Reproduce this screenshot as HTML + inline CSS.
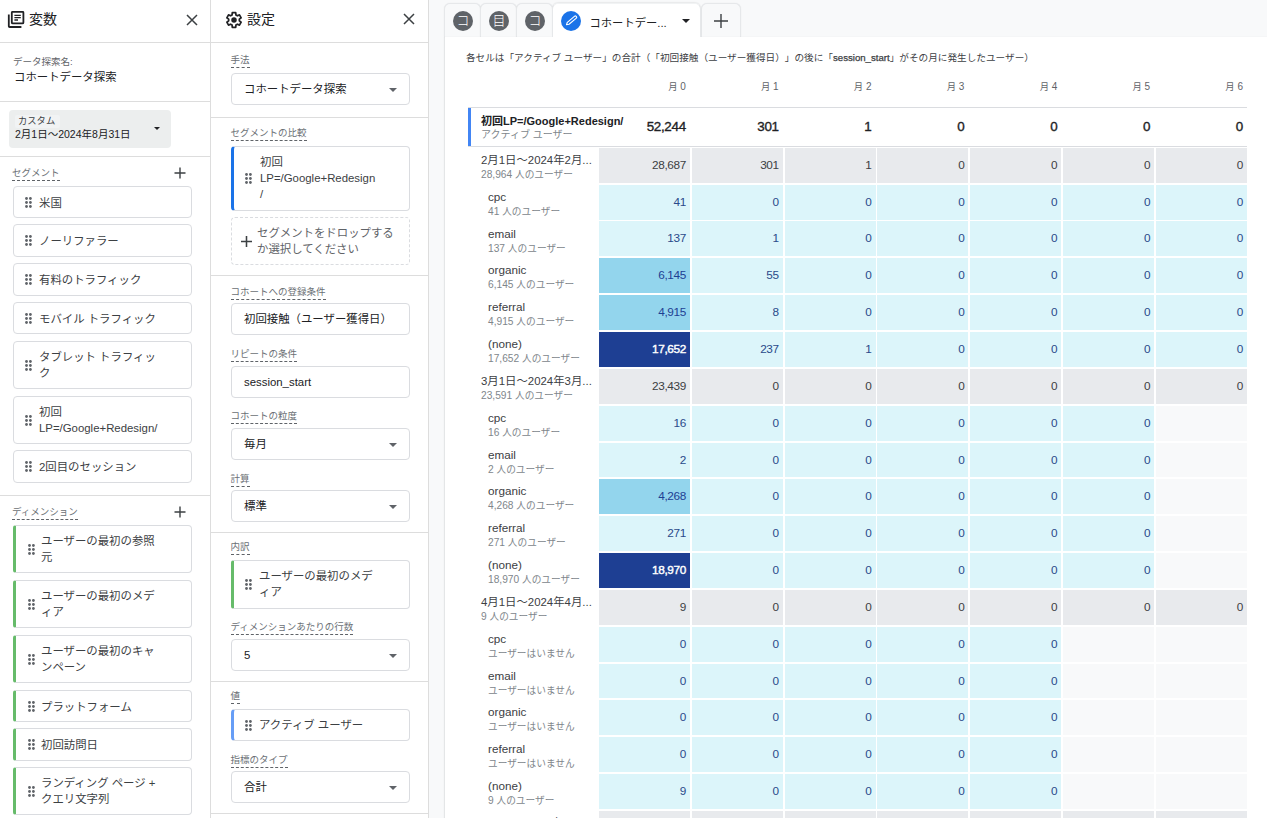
<!DOCTYPE html><html lang="ja"><head><meta charset="utf-8"><title>コホートデータ探索</title><style>
*{box-sizing:border-box;margin:0;padding:0}
html,body{text-spacing-trim:space-all;width:1267px;height:818px;overflow:hidden;background:#f8f9fa;font-family:"Liberation Sans", "Noto Sans CJK JP", sans-serif;color:#202124;font-size:12px}
.abs{position:absolute}
.panel{position:absolute;top:0;height:818px;background:#fff;overflow:hidden}
#vars{left:0;width:211px;border-right:1px solid #dddddd}
#sets{left:211px;width:218px;border-right:1px solid #dddddd}
.hline{position:absolute;left:0;right:0;height:1px;background:#dddddd}
.ptitle{position:absolute;top:9.5px;font-size:14px;line-height:18px;color:#202124}
.lbl{position:absolute;font-size:9.5px;line-height:12px;color:#6b7075;border-bottom:1px dashed #5f6368;padding-bottom:1px;white-space:nowrap}
.chip{position:absolute;background:#fff;border:1px solid #dadce0;border-radius:4px;font-size:11.4px;line-height:16px;color:#3c4043}
.chip .t{position:absolute;left:25px;white-space:nowrap}
.chip.g{border-left:3px solid #66bb6a;border-radius:3px 4px 4px 3px}
.chip.b{border-left:3px solid #1a73e8}
.chip.lb{border-left:3px solid #669df6}
.grip{position:absolute;width:7px;height:11px}
.sel{position:absolute;background:#fff;border:1px solid #dadce0;border-radius:4px;font-size:11.4px;line-height:16px;color:#202124}
.sel .t{position:absolute;left:12px;white-space:nowrap}
.arr{position:absolute;width:0;height:0;border-left:4.2px solid transparent;border-right:4.2px solid transparent;border-top:4.4px solid #5f6368}
#canvas{position:absolute;left:444.5px;top:37px;width:823px;height:781px;background:#fff;box-shadow:-1px 0 1px rgba(60,64,67,.10)}
.tab{position:absolute;top:3px;height:34px;background:#f8f9fa;border:1px solid #e6e8ea;border-bottom:none;border-radius:6px 6px 0 0;box-shadow:0 0 1px rgba(60,64,67,.12)}
.tab.act{background:#fff;border-color:#f1f3f4 #e6e8ea #fff #e6e8ea;box-shadow:0 -1px 1px rgba(60,64,67,.08)}
.circ{position:absolute;top:7px;width:20px;height:20px;border-radius:50%;background:#5f6368;color:#fff;font-size:13px;font-weight:300;line-height:19px;text-align:center}
.cell{position:absolute;height:34.9px;font-size:11.8px;letter-spacing:-.4px;line-height:35.6px;text-align:right;padding-right:4px;color:#3c4043}
.cell.c{background:#dcf5fa;color:#2a4a8a}
.cell.m{background:#93d5ed;color:#1e3f93}
.cell.d{background:#1e3f93;color:#fff;-webkit-text-stroke:.4px #fff}
.cell.gr{background:#e8eaed;color:#3c4043}
.cell.e{background:#f8f9fa}
.rl{position:absolute;font-size:11.4px;line-height:14px;color:#3c4043;white-space:nowrap}
.j{font-size:9.7px}
.rs{position:absolute;font-size:10.2px;line-height:12px;color:#80868b;white-space:nowrap}
.ch{position:absolute;font-size:10px;line-height:12px;color:#5f6368;text-align:right;white-space:nowrap}
</style></head><body>
<div class="panel" id="vars">
<svg class="abs" style="left:7px;top:11px" width="18" height="18" viewBox="0 0 18 18" fill="none" stroke="#202124" stroke-width="1.8"><path d="M1.8 3.4v11.8q0 .8 .8 .8h11.800"/><rect x="4.8" y=".8" width="11.6" height="11.6" rx="1"/><path d="M7.4 4.4h6.4M7.4 6.7h6.4M7.4 9h3.6" stroke-width="1.3"/></svg>
<div class="ptitle" style="left:29px">変数</div>
<svg class="abs" style="left:185.500px;top:13.600px" width="12" height="12" viewBox="0 0 12 12" stroke="#3c4043" stroke-width="1.5"><path d="M1 1l10 10M11 1L1 11"/></svg>
<div class="hline" style="top:42px"></div>
<div class="abs" style="left:13px;top:56px;font-size:9.5px;line-height:12px;color:#5f6368">データ探索名:</div>
<div class="abs" style="left:14px;top:69px;font-size:11.4px;line-height:16px;color:#202124">コホートデータ探索</div>
<div class="hline" style="top:101px"></div>
<div class="abs" style="left:9px;top:110px;width:162px;height:38px;background:#eceeee;border-radius:4px"></div>
<div class="abs" style="left:15px;top:115px;width:45px;height:13px;background:#f1f3f4;border-radius:2px"></div>
<div class="abs" style="left:18px;top:115px;font-size:9.3px;line-height:12px;color:#3c4043">カスタム</div>
<div class="abs" style="left:15px;top:127px;font-size:10.5px;line-height:14px;color:#202124;white-space:nowrap">2月1日～2024年8月31日</div>
<div class="arr" style="left:154px;top:127px;border-top-color:#202124;border-width:3px 3px 0 3px;border-top-width:3px"></div>
<div class="hline" style="top:156px"></div>
<div class="lbl" style="left:12px;top:167px">セグメント</div>
<svg class="abs" style="left:174px;top:167px" width="12" height="12" viewBox="0 0 12 12" stroke="#3c4043" stroke-width="1.4"><path d="M6 .5v11M.5 6h11"/></svg>
<div class="chip" style="left:13px;top:186px;width:179px;height:32px">
<svg class="grip" style="left:11px;top:10px" viewBox="0 0 7 11"><g fill="#5f6368"><circle cx="1.50" cy="1.50" r="1.4"/><circle cx="5.40" cy="1.50" r="1.4"/><circle cx="1.50" cy="5.50" r="1.4"/><circle cx="5.40" cy="5.50" r="1.4"/><circle cx="1.50" cy="9.50" r="1.4"/><circle cx="5.40" cy="9.50" r="1.4"/></g></svg>
<div class="t" style="left:25px;top:8px">米国</div>
</div>
<div class="chip" style="left:13px;top:224px;width:179px;height:33px">
<svg class="grip" style="left:11px;top:10px" viewBox="0 0 7 11"><g fill="#5f6368"><circle cx="1.50" cy="1.50" r="1.4"/><circle cx="5.40" cy="1.50" r="1.4"/><circle cx="1.50" cy="5.50" r="1.4"/><circle cx="5.40" cy="5.50" r="1.4"/><circle cx="1.50" cy="9.50" r="1.4"/><circle cx="5.40" cy="9.50" r="1.4"/></g></svg>
<div class="t" style="left:25px;top:8px">ノーリファラー</div>
</div>
<div class="chip" style="left:13px;top:263px;width:179px;height:33px">
<svg class="grip" style="left:11px;top:10px" viewBox="0 0 7 11"><g fill="#5f6368"><circle cx="1.50" cy="1.50" r="1.4"/><circle cx="5.40" cy="1.50" r="1.4"/><circle cx="1.50" cy="5.50" r="1.4"/><circle cx="5.40" cy="5.50" r="1.4"/><circle cx="1.50" cy="9.50" r="1.4"/><circle cx="5.40" cy="9.50" r="1.4"/></g></svg>
<div class="t" style="left:25px;top:8px">有料のトラフィック</div>
</div>
<div class="chip" style="left:13px;top:302px;width:179px;height:32px">
<svg class="grip" style="left:11px;top:10px" viewBox="0 0 7 11"><g fill="#5f6368"><circle cx="1.50" cy="1.50" r="1.4"/><circle cx="5.40" cy="1.50" r="1.4"/><circle cx="1.50" cy="5.50" r="1.4"/><circle cx="5.40" cy="5.50" r="1.4"/><circle cx="1.50" cy="9.50" r="1.4"/><circle cx="5.40" cy="9.50" r="1.4"/></g></svg>
<div class="t" style="left:25px;top:8px">モバイル トラフィック</div>
</div>
<div class="chip" style="left:13px;top:341px;width:179px;height:48px">
<svg class="grip" style="left:11px;top:18px" viewBox="0 0 7 11"><g fill="#5f6368"><circle cx="1.50" cy="1.50" r="1.4"/><circle cx="5.40" cy="1.50" r="1.4"/><circle cx="1.50" cy="5.50" r="1.4"/><circle cx="5.40" cy="5.50" r="1.4"/><circle cx="1.50" cy="9.50" r="1.4"/><circle cx="5.40" cy="9.50" r="1.4"/></g></svg>
<div class="t" style="left:25px;top:7px">タブレット トラフィッ<br>ク</div>
</div>
<div class="chip" style="left:13px;top:396px;width:179px;height:48px">
<svg class="grip" style="left:11px;top:18px" viewBox="0 0 7 11"><g fill="#5f6368"><circle cx="1.50" cy="1.50" r="1.4"/><circle cx="5.40" cy="1.50" r="1.4"/><circle cx="1.50" cy="5.50" r="1.4"/><circle cx="5.40" cy="5.50" r="1.4"/><circle cx="1.50" cy="9.50" r="1.4"/><circle cx="5.40" cy="9.50" r="1.4"/></g></svg>
<div class="t" style="left:25px;top:7px">初回<br>LP=/Google+Redesign/</div>
</div>
<div class="chip" style="left:13px;top:450px;width:179px;height:33px">
<svg class="grip" style="left:11px;top:10px" viewBox="0 0 7 11"><g fill="#5f6368"><circle cx="1.50" cy="1.50" r="1.4"/><circle cx="5.40" cy="1.50" r="1.4"/><circle cx="1.50" cy="5.50" r="1.4"/><circle cx="5.40" cy="5.50" r="1.4"/><circle cx="1.50" cy="9.50" r="1.4"/><circle cx="5.40" cy="9.50" r="1.4"/></g></svg>
<div class="t" style="left:25px;top:8px">2回目のセッション</div>
</div>
<div class="hline" style="top:495px"></div>
<div class="lbl" style="left:12px;top:506px">ディメンション</div>
<svg class="abs" style="left:174px;top:506px" width="12" height="12" viewBox="0 0 12 12" stroke="#3c4043" stroke-width="1.4"><path d="M6 .5v11M.5 6h11"/></svg>
<div class="chip g" style="left:13px;top:525px;width:179px;height:48px">
<svg class="grip" style="left:12px;top:18px" viewBox="0 0 7 11"><g fill="#5f6368"><circle cx="1.50" cy="1.50" r="1.4"/><circle cx="5.40" cy="1.50" r="1.4"/><circle cx="1.50" cy="5.50" r="1.4"/><circle cx="5.40" cy="5.50" r="1.4"/><circle cx="1.50" cy="9.50" r="1.4"/><circle cx="5.40" cy="9.50" r="1.4"/></g></svg>
<div class="t" style="left:25px;top:7px">ユーザーの最初の参照<br>元</div>
</div>
<div class="chip g" style="left:13px;top:580px;width:179px;height:48px">
<svg class="grip" style="left:12px;top:18px" viewBox="0 0 7 11"><g fill="#5f6368"><circle cx="1.50" cy="1.50" r="1.4"/><circle cx="5.40" cy="1.50" r="1.4"/><circle cx="1.50" cy="5.50" r="1.4"/><circle cx="5.40" cy="5.50" r="1.4"/><circle cx="1.50" cy="9.50" r="1.4"/><circle cx="5.40" cy="9.50" r="1.4"/></g></svg>
<div class="t" style="left:25px;top:7px">ユーザーの最初のメデ<br>ィア</div>
</div>
<div class="chip g" style="left:13px;top:635px;width:179px;height:48px">
<svg class="grip" style="left:12px;top:18px" viewBox="0 0 7 11"><g fill="#5f6368"><circle cx="1.50" cy="1.50" r="1.4"/><circle cx="5.40" cy="1.50" r="1.4"/><circle cx="1.50" cy="5.50" r="1.4"/><circle cx="5.40" cy="5.50" r="1.4"/><circle cx="1.50" cy="9.50" r="1.4"/><circle cx="5.40" cy="9.50" r="1.4"/></g></svg>
<div class="t" style="left:25px;top:7px">ユーザーの最初のキャ<br>ンペーン</div>
</div>
<div class="chip g" style="left:13px;top:690px;width:179px;height:32px">
<svg class="grip" style="left:12px;top:10px" viewBox="0 0 7 11"><g fill="#5f6368"><circle cx="1.50" cy="1.50" r="1.4"/><circle cx="5.40" cy="1.50" r="1.4"/><circle cx="1.50" cy="5.50" r="1.4"/><circle cx="5.40" cy="5.50" r="1.4"/><circle cx="1.50" cy="9.50" r="1.4"/><circle cx="5.40" cy="9.50" r="1.4"/></g></svg>
<div class="t" style="left:25px;top:8px">プラットフォーム</div>
</div>
<div class="chip g" style="left:13px;top:728px;width:179px;height:33px">
<svg class="grip" style="left:12px;top:10px" viewBox="0 0 7 11"><g fill="#5f6368"><circle cx="1.50" cy="1.50" r="1.4"/><circle cx="5.40" cy="1.50" r="1.4"/><circle cx="1.50" cy="5.50" r="1.4"/><circle cx="5.40" cy="5.50" r="1.4"/><circle cx="1.50" cy="9.50" r="1.4"/><circle cx="5.40" cy="9.50" r="1.4"/></g></svg>
<div class="t" style="left:25px;top:8px">初回訪問日</div>
</div>
<div class="chip g" style="left:13px;top:767px;width:179px;height:48px">
<svg class="grip" style="left:12px;top:18px" viewBox="0 0 7 11"><g fill="#5f6368"><circle cx="1.50" cy="1.50" r="1.4"/><circle cx="5.40" cy="1.50" r="1.4"/><circle cx="1.50" cy="5.50" r="1.4"/><circle cx="5.40" cy="5.50" r="1.4"/><circle cx="1.50" cy="9.50" r="1.4"/><circle cx="5.40" cy="9.50" r="1.4"/></g></svg>
<div class="t" style="left:25px;top:7px">ランディング ページ +<br>クエリ文字列</div>
</div>
</div>
<div class="panel" id="sets">
<svg class="abs" style="left:14px;top:10.500px" width="18" height="18" viewBox="-8.800 -8.800 17.600 17.600"><path d="M-1.90 -4.95 L-1.64 -7.11 L1.64 -7.11 L1.90 -4.95 L3.34 -4.12 L5.34 -4.98 L6.98 -2.13 L5.23 -0.83 L5.23 0.83 L6.98 2.13 L5.34 4.98 L3.34 4.12 L1.90 4.95 L1.64 7.11 L-1.64 7.11 L-1.90 4.95 L-3.34 4.12 L-5.34 4.98 L-6.98 2.13 L-5.23 0.83 L-5.23 -0.83 L-6.98 -2.13 L-5.34 -4.98 L-3.34 -4.12Z" fill="none" stroke="#202124" stroke-width="1.7" stroke-linejoin="round"/><circle r="2.7" fill="#202124"/></svg>
<div class="ptitle" style="left:36px">設定</div>
<svg class="abs" style="left:191.500px;top:13px" width="12" height="12" viewBox="0 0 12 12" stroke="#3c4043" stroke-width="1.5"><path d="M1 1l10 10M11 1L1 11"/></svg>
<div class="hline" style="top:42px"></div>
<div class="lbl" style="left:19.5px;top:54px">手法</div>
<div class="sel" style="left:20px;top:73px;width:179px;height:32px"><div class="t" style="top:7px">コホートデータ探索</div>
<div class="arr" style="right:12px;top:14px"></div>
</div>
<div class="hline" style="top:117px"></div>
<div class="lbl" style="left:19.5px;top:127px">セグメントの比較</div>
<div class="chip b" style="left:20px;top:146px;width:179px;height:65px"><svg class="grip" style="left:11px;top:25.5px" viewBox="0 0 7 11"><g fill="#5f6368"><circle cx="1.50" cy="1.50" r="1.4"/><circle cx="5.40" cy="1.50" r="1.4"/><circle cx="1.50" cy="5.50" r="1.4"/><circle cx="5.40" cy="5.50" r="1.4"/><circle cx="1.50" cy="9.50" r="1.4"/><circle cx="5.40" cy="9.50" r="1.4"/></g></svg><div class="t" style="left:26px;top:7px">初回<br>LP=/Google+Redesign<br>/</div></div>
<div class="abs" style="left:20px;top:217px;width:179px;height:48px;border:1px dashed #dadce0;border-radius:4px"></div>
<svg class="abs" style="left:29.500px;top:235.500px" width="11" height="11" viewBox="0 0 10 10" stroke="#3c4043" stroke-width="1.4"><path d="M5 0v10M0 5h10"/></svg>
<div class="abs" style="left:46px;top:225px;font-size:11.4px;line-height:16px;color:#5f6368;white-space:nowrap">セグメントをドロップする<br>か選択してください</div>
<div class="hline" style="top:275px"></div>
<div class="lbl" style="left:19.5px;top:286px">コホートへの登録条件</div>
<div class="sel" style="left:20px;top:303px;width:179px;height:32px"><div class="t" style="top:7px">初回接触（ユーザー獲得日）</div>
</div>
<div class="lbl" style="left:19.5px;top:348px">リピートの条件</div>
<div class="sel" style="left:20px;top:366px;width:179px;height:32px"><div class="t" style="top:7px">session_start</div>
</div>
<div class="lbl" style="left:19.5px;top:410px">コホートの粒度</div>
<div class="sel" style="left:20px;top:428px;width:179px;height:32px"><div class="t" style="top:7px">毎月</div>
<div class="arr" style="right:12px;top:14px"></div>
</div>
<div class="lbl" style="left:19.5px;top:473px">計算</div>
<div class="sel" style="left:20px;top:490px;width:179px;height:32px"><div class="t" style="top:7px">標準</div>
<div class="arr" style="right:12px;top:14px"></div>
</div>
<div class="hline" style="top:532px"></div>
<div class="lbl" style="left:19.5px;top:541px">内訳</div>
<div class="chip g" style="left:20px;top:560px;width:179px;height:49px"><svg class="grip" style="left:11px;top:18px" viewBox="0 0 7 11"><g fill="#5f6368"><circle cx="1.50" cy="1.50" r="1.4"/><circle cx="5.40" cy="1.50" r="1.4"/><circle cx="1.50" cy="5.50" r="1.4"/><circle cx="5.40" cy="5.50" r="1.4"/><circle cx="1.50" cy="9.50" r="1.4"/><circle cx="5.40" cy="9.50" r="1.4"/></g></svg><div class="t" style="left:25px;top:7px">ユーザーの最初のメデ<br>ィア</div></div>
<div class="lbl" style="left:19.5px;top:621px">ディメンションあたりの行数</div>
<div class="sel" style="left:20px;top:639px;width:179px;height:32px"><div class="t" style="top:7px">5</div>
<div class="arr" style="right:12px;top:14px"></div>
</div>
<div class="hline" style="top:681px"></div>
<div class="lbl" style="left:19.5px;top:690px">値</div>
<div class="chip lb" style="left:20px;top:709px;width:179px;height:32px"><svg class="grip" style="left:11px;top:10px" viewBox="0 0 7 11"><g fill="#5f6368"><circle cx="1.50" cy="1.50" r="1.4"/><circle cx="5.40" cy="1.50" r="1.4"/><circle cx="1.50" cy="5.50" r="1.4"/><circle cx="5.40" cy="5.50" r="1.4"/><circle cx="1.50" cy="9.50" r="1.4"/><circle cx="5.40" cy="9.50" r="1.4"/></g></svg><div class="t" style="left:25px;top:7px">アクティブ ユーザー</div></div>
<div class="lbl" style="left:19.5px;top:754px">指標のタイプ</div>
<div class="sel" style="left:20px;top:771px;width:179px;height:32px"><div class="t" style="top:7px">合計</div>
<div class="arr" style="right:12px;top:14px"></div>
</div>
<div class="hline" style="top:813px"></div>
</div>
<div class="tab" style="left:444px;width:37px"><div class="circ" style="left:8px">コ</div></div>
<div class="tab" style="left:480px;width:37px"><div class="circ" style="left:8px">目</div></div>
<div class="tab" style="left:516px;width:37px"><div class="circ" style="left:8px">コ</div></div>
<div class="tab" style="left:701px;width:40px"><svg class="abs" style="left:12px;top:10px" width="14" height="14" viewBox="0 0 14 14" stroke="#3c4043" stroke-width="1.4"><path d="M7 0v14M0 7h14"/></svg></div>
<div id="canvas"></div>
<div class="tab act" style="left:552px;width:149px"><div class="circ" style="left:8px;background:#1a73e8"><svg style="position:absolute;left:0;top:0" width="20" height="20" viewBox="0 0 20 20" fill="none" stroke="#fff" stroke-width="1.1" stroke-linejoin="round"><g transform="translate(10.4,9.6) rotate(-40)"><path d="M-4.200 -1.300H5.400Q6.300 -1.300 6.300 -.5V.5Q6.300 1.300 5.400 1.300H-4.200L-6.400 0Z"/></g></svg></div><div class="abs" style="left:36.500px;top:10.500px;font-size:11.3px;line-height:16px;white-space:nowrap">コホートデー...</div><div class="arr" style="left:129px;top:15px;border-top-color:#202124"></div></div>
<div class="abs" id="desc" style="left:466px;top:52px;font-size:9.65px;line-height:12px;color:#3c4043;white-space:nowrap">各セルは「アクティブ ユーザー」の合計（「初回接触（ユーザー獲得日）」の後に「<span style="-webkit-text-stroke:.25px #3c4043">session_start</span>」がその月に発生したユーザー）</div>
<div class="ch" style="left:598.8px;top:81px;width:87.0px"><span style="font-size:9.3px">月</span> 0</div>
<div class="ch" style="left:691.7px;top:81px;width:87.0px"><span style="font-size:9.3px">月</span> 1</div>
<div class="ch" style="left:784.5px;top:81px;width:87.0px"><span style="font-size:9.3px">月</span> 2</div>
<div class="ch" style="left:877.4px;top:81px;width:87.0px"><span style="font-size:9.3px">月</span> 3</div>
<div class="ch" style="left:970.3px;top:81px;width:87.0px"><span style="font-size:9.3px">月</span> 4</div>
<div class="ch" style="left:1063.2px;top:81px;width:87.0px"><span style="font-size:9.3px">月</span> 5</div>
<div class="ch" style="left:1156.0px;top:81px;width:87.0px"><span style="font-size:9.3px">月</span> 6</div>
<div class="abs" style="left:468px;top:107px;width:779px;height:1px;background:#dadce0"></div>
<div class="abs" style="left:468px;top:146px;width:779px;height:1px;background:#dadce0"></div>
<div class="abs" style="left:468px;top:108px;width:3px;height:38px;background:#4285f4"></div>
<div class="abs" style="left:481px;top:113.5px;font-size:11px;line-height:14px;font-weight:bold;color:#202124;white-space:nowrap">初回LP=/Google+Redesign/</div>
<div class="abs" style="left:481px;top:129px;font-size:10px;line-height:12px;color:#80868b;white-space:nowrap">アクティブ ユーザー</div>
<div class="abs" style="left:598.8px;top:108px;width:87.0px;height:38px;line-height:38px;text-align:right;font-size:13.4px;letter-spacing:-.3px;-webkit-text-stroke:.35px #202124;color:#202124">52,244</div>
<div class="abs" style="left:691.7px;top:108px;width:87.0px;height:38px;line-height:38px;text-align:right;font-size:13.4px;letter-spacing:-.3px;-webkit-text-stroke:.35px #202124;color:#202124">301</div>
<div class="abs" style="left:784.5px;top:108px;width:87.0px;height:38px;line-height:38px;text-align:right;font-size:13.4px;letter-spacing:-.3px;-webkit-text-stroke:.35px #202124;color:#202124">1</div>
<div class="abs" style="left:877.4px;top:108px;width:87.0px;height:38px;line-height:38px;text-align:right;font-size:13.4px;letter-spacing:-.3px;-webkit-text-stroke:.35px #202124;color:#202124">0</div>
<div class="abs" style="left:970.3px;top:108px;width:87.0px;height:38px;line-height:38px;text-align:right;font-size:13.4px;letter-spacing:-.3px;-webkit-text-stroke:.35px #202124;color:#202124">0</div>
<div class="abs" style="left:1063.2px;top:108px;width:87.0px;height:38px;line-height:38px;text-align:right;font-size:13.4px;letter-spacing:-.3px;-webkit-text-stroke:.35px #202124;color:#202124">0</div>
<div class="abs" style="left:1156.0px;top:108px;width:87.0px;height:38px;line-height:38px;text-align:right;font-size:13.4px;letter-spacing:-.3px;-webkit-text-stroke:.35px #202124;color:#202124">0</div>
<div class="rl" style="left:481px;top:152.8px">2月1日～2024年2月...</div>
<div class="rs" style="left:481px;top:168.8px">28,964 <span class="j">人のユーザー</span></div>
<div class="cell gr" style="left:598.80px;top:147.80px;width:91.00px">28,687</div>
<div class="cell gr" style="left:691.67px;top:147.80px;width:91.00px">301</div>
<div class="cell gr" style="left:784.54px;top:147.80px;width:91.00px">1</div>
<div class="cell gr" style="left:877.41px;top:147.80px;width:91.00px">0</div>
<div class="cell gr" style="left:970.28px;top:147.80px;width:91.00px">0</div>
<div class="cell gr" style="left:1063.15px;top:147.80px;width:91.00px">0</div>
<div class="cell gr" style="left:1156.02px;top:147.80px;width:91.00px">0</div>
<div class="rl" style="left:488px;top:189.6px;font-size:11.7px">cpc</div>
<div class="rs" style="left:488px;top:205.6px">41 <span class="j">人のユーザー</span></div>
<div class="cell c" style="left:598.80px;top:184.64px;width:91.00px">41</div>
<div class="cell c" style="left:691.67px;top:184.64px;width:91.00px">0</div>
<div class="cell c" style="left:784.54px;top:184.64px;width:91.00px">0</div>
<div class="cell c" style="left:877.41px;top:184.64px;width:91.00px">0</div>
<div class="cell c" style="left:970.28px;top:184.64px;width:91.00px">0</div>
<div class="cell c" style="left:1063.15px;top:184.64px;width:91.00px">0</div>
<div class="cell c" style="left:1156.02px;top:184.64px;width:91.00px">0</div>
<div class="rl" style="left:488px;top:226.5px;font-size:11.7px">email</div>
<div class="rs" style="left:488px;top:242.5px">137 <span class="j">人のユーザー</span></div>
<div class="cell c" style="left:598.80px;top:221.48px;width:91.00px">137</div>
<div class="cell c" style="left:691.67px;top:221.48px;width:91.00px">1</div>
<div class="cell c" style="left:784.54px;top:221.48px;width:91.00px">0</div>
<div class="cell c" style="left:877.41px;top:221.48px;width:91.00px">0</div>
<div class="cell c" style="left:970.28px;top:221.48px;width:91.00px">0</div>
<div class="cell c" style="left:1063.15px;top:221.48px;width:91.00px">0</div>
<div class="cell c" style="left:1156.02px;top:221.48px;width:91.00px">0</div>
<div class="rl" style="left:488px;top:263.3px;font-size:11.7px">organic</div>
<div class="rs" style="left:488px;top:279.3px">6,145 <span class="j">人のユーザー</span></div>
<div class="cell m" style="left:598.80px;top:258.32px;width:91.00px">6,145</div>
<div class="cell c" style="left:691.67px;top:258.32px;width:91.00px">55</div>
<div class="cell c" style="left:784.54px;top:258.32px;width:91.00px">0</div>
<div class="cell c" style="left:877.41px;top:258.32px;width:91.00px">0</div>
<div class="cell c" style="left:970.28px;top:258.32px;width:91.00px">0</div>
<div class="cell c" style="left:1063.15px;top:258.32px;width:91.00px">0</div>
<div class="cell c" style="left:1156.02px;top:258.32px;width:91.00px">0</div>
<div class="rl" style="left:488px;top:300.2px;font-size:11.7px">referral</div>
<div class="rs" style="left:488px;top:316.2px">4,915 <span class="j">人のユーザー</span></div>
<div class="cell m" style="left:598.80px;top:295.16px;width:91.00px">4,915</div>
<div class="cell c" style="left:691.67px;top:295.16px;width:91.00px">8</div>
<div class="cell c" style="left:784.54px;top:295.16px;width:91.00px">0</div>
<div class="cell c" style="left:877.41px;top:295.16px;width:91.00px">0</div>
<div class="cell c" style="left:970.28px;top:295.16px;width:91.00px">0</div>
<div class="cell c" style="left:1063.15px;top:295.16px;width:91.00px">0</div>
<div class="cell c" style="left:1156.02px;top:295.16px;width:91.00px">0</div>
<div class="rl" style="left:488px;top:337.0px;font-size:11.7px">(none)</div>
<div class="rs" style="left:488px;top:353.0px">17,652 <span class="j">人のユーザー</span></div>
<div class="cell d" style="left:598.80px;top:332.00px;width:91.00px">17,652</div>
<div class="cell c" style="left:691.67px;top:332.00px;width:91.00px">237</div>
<div class="cell c" style="left:784.54px;top:332.00px;width:91.00px">1</div>
<div class="cell c" style="left:877.41px;top:332.00px;width:91.00px">0</div>
<div class="cell c" style="left:970.28px;top:332.00px;width:91.00px">0</div>
<div class="cell c" style="left:1063.15px;top:332.00px;width:91.00px">0</div>
<div class="cell c" style="left:1156.02px;top:332.00px;width:91.00px">0</div>
<div class="rl" style="left:481px;top:373.8px">3月1日～2024年3月...</div>
<div class="rs" style="left:481px;top:389.8px">23,591 <span class="j">人のユーザー</span></div>
<div class="cell gr" style="left:598.80px;top:368.84px;width:91.00px">23,439</div>
<div class="cell gr" style="left:691.67px;top:368.84px;width:91.00px">0</div>
<div class="cell gr" style="left:784.54px;top:368.84px;width:91.00px">0</div>
<div class="cell gr" style="left:877.41px;top:368.84px;width:91.00px">0</div>
<div class="cell gr" style="left:970.28px;top:368.84px;width:91.00px">0</div>
<div class="cell gr" style="left:1063.15px;top:368.84px;width:91.00px">0</div>
<div class="cell gr" style="left:1156.02px;top:368.84px;width:91.00px">0</div>
<div class="rl" style="left:488px;top:410.7px;font-size:11.7px">cpc</div>
<div class="rs" style="left:488px;top:426.7px">16 <span class="j">人のユーザー</span></div>
<div class="cell c" style="left:598.80px;top:405.68px;width:91.00px">16</div>
<div class="cell c" style="left:691.67px;top:405.68px;width:91.00px">0</div>
<div class="cell c" style="left:784.54px;top:405.68px;width:91.00px">0</div>
<div class="cell c" style="left:877.41px;top:405.68px;width:91.00px">0</div>
<div class="cell c" style="left:970.28px;top:405.68px;width:91.00px">0</div>
<div class="cell c" style="left:1063.15px;top:405.68px;width:91.00px">0</div>
<div class="cell e" style="left:1156.02px;top:405.68px;width:91.00px"></div>
<div class="rl" style="left:488px;top:447.5px;font-size:11.7px">email</div>
<div class="rs" style="left:488px;top:463.5px">2 <span class="j">人のユーザー</span></div>
<div class="cell c" style="left:598.80px;top:442.52px;width:91.00px">2</div>
<div class="cell c" style="left:691.67px;top:442.52px;width:91.00px">0</div>
<div class="cell c" style="left:784.54px;top:442.52px;width:91.00px">0</div>
<div class="cell c" style="left:877.41px;top:442.52px;width:91.00px">0</div>
<div class="cell c" style="left:970.28px;top:442.52px;width:91.00px">0</div>
<div class="cell c" style="left:1063.15px;top:442.52px;width:91.00px">0</div>
<div class="cell e" style="left:1156.02px;top:442.52px;width:91.00px"></div>
<div class="rl" style="left:488px;top:484.4px;font-size:11.7px">organic</div>
<div class="rs" style="left:488px;top:500.4px">4,268 <span class="j">人のユーザー</span></div>
<div class="cell m" style="left:598.80px;top:479.36px;width:91.00px">4,268</div>
<div class="cell c" style="left:691.67px;top:479.36px;width:91.00px">0</div>
<div class="cell c" style="left:784.54px;top:479.36px;width:91.00px">0</div>
<div class="cell c" style="left:877.41px;top:479.36px;width:91.00px">0</div>
<div class="cell c" style="left:970.28px;top:479.36px;width:91.00px">0</div>
<div class="cell c" style="left:1063.15px;top:479.36px;width:91.00px">0</div>
<div class="cell e" style="left:1156.02px;top:479.36px;width:91.00px"></div>
<div class="rl" style="left:488px;top:521.2px;font-size:11.7px">referral</div>
<div class="rs" style="left:488px;top:537.2px">271 <span class="j">人のユーザー</span></div>
<div class="cell c" style="left:598.80px;top:516.20px;width:91.00px">271</div>
<div class="cell c" style="left:691.67px;top:516.20px;width:91.00px">0</div>
<div class="cell c" style="left:784.54px;top:516.20px;width:91.00px">0</div>
<div class="cell c" style="left:877.41px;top:516.20px;width:91.00px">0</div>
<div class="cell c" style="left:970.28px;top:516.20px;width:91.00px">0</div>
<div class="cell c" style="left:1063.15px;top:516.20px;width:91.00px">0</div>
<div class="cell e" style="left:1156.02px;top:516.20px;width:91.00px"></div>
<div class="rl" style="left:488px;top:558.0px;font-size:11.7px">(none)</div>
<div class="rs" style="left:488px;top:574.0px">18,970 <span class="j">人のユーザー</span></div>
<div class="cell d" style="left:598.80px;top:553.04px;width:91.00px">18,970</div>
<div class="cell c" style="left:691.67px;top:553.04px;width:91.00px">0</div>
<div class="cell c" style="left:784.54px;top:553.04px;width:91.00px">0</div>
<div class="cell c" style="left:877.41px;top:553.04px;width:91.00px">0</div>
<div class="cell c" style="left:970.28px;top:553.04px;width:91.00px">0</div>
<div class="cell c" style="left:1063.15px;top:553.04px;width:91.00px">0</div>
<div class="cell e" style="left:1156.02px;top:553.04px;width:91.00px"></div>
<div class="rl" style="left:481px;top:594.9px">4月1日～2024年4月...</div>
<div class="rs" style="left:481px;top:610.9px">9 <span class="j">人のユーザー</span></div>
<div class="cell gr" style="left:598.80px;top:589.88px;width:91.00px">9</div>
<div class="cell gr" style="left:691.67px;top:589.88px;width:91.00px">0</div>
<div class="cell gr" style="left:784.54px;top:589.88px;width:91.00px">0</div>
<div class="cell gr" style="left:877.41px;top:589.88px;width:91.00px">0</div>
<div class="cell gr" style="left:970.28px;top:589.88px;width:91.00px">0</div>
<div class="cell gr" style="left:1063.15px;top:589.88px;width:91.00px">0</div>
<div class="cell gr" style="left:1156.02px;top:589.88px;width:91.00px">0</div>
<div class="rl" style="left:488px;top:631.7px;font-size:11.7px">cpc</div>
<div class="rs" style="left:488px;top:647.7px"><span class="j">ユーザーはいません</span></div>
<div class="cell c" style="left:598.80px;top:626.72px;width:91.00px">0</div>
<div class="cell c" style="left:691.67px;top:626.72px;width:91.00px">0</div>
<div class="cell c" style="left:784.54px;top:626.72px;width:91.00px">0</div>
<div class="cell c" style="left:877.41px;top:626.72px;width:91.00px">0</div>
<div class="cell c" style="left:970.28px;top:626.72px;width:91.00px">0</div>
<div class="cell e" style="left:1063.15px;top:626.72px;width:91.00px"></div>
<div class="cell e" style="left:1156.02px;top:626.72px;width:91.00px"></div>
<div class="rl" style="left:488px;top:668.6px;font-size:11.7px">email</div>
<div class="rs" style="left:488px;top:684.6px"><span class="j">ユーザーはいません</span></div>
<div class="cell c" style="left:598.80px;top:663.56px;width:91.00px">0</div>
<div class="cell c" style="left:691.67px;top:663.56px;width:91.00px">0</div>
<div class="cell c" style="left:784.54px;top:663.56px;width:91.00px">0</div>
<div class="cell c" style="left:877.41px;top:663.56px;width:91.00px">0</div>
<div class="cell c" style="left:970.28px;top:663.56px;width:91.00px">0</div>
<div class="cell e" style="left:1063.15px;top:663.56px;width:91.00px"></div>
<div class="cell e" style="left:1156.02px;top:663.56px;width:91.00px"></div>
<div class="rl" style="left:488px;top:705.4px;font-size:11.7px">organic</div>
<div class="rs" style="left:488px;top:721.4px"><span class="j">ユーザーはいません</span></div>
<div class="cell c" style="left:598.80px;top:700.40px;width:91.00px">0</div>
<div class="cell c" style="left:691.67px;top:700.40px;width:91.00px">0</div>
<div class="cell c" style="left:784.54px;top:700.40px;width:91.00px">0</div>
<div class="cell c" style="left:877.41px;top:700.40px;width:91.00px">0</div>
<div class="cell c" style="left:970.28px;top:700.40px;width:91.00px">0</div>
<div class="cell e" style="left:1063.15px;top:700.40px;width:91.00px"></div>
<div class="cell e" style="left:1156.02px;top:700.40px;width:91.00px"></div>
<div class="rl" style="left:488px;top:742.2px;font-size:11.7px">referral</div>
<div class="rs" style="left:488px;top:758.2px"><span class="j">ユーザーはいません</span></div>
<div class="cell c" style="left:598.80px;top:737.24px;width:91.00px">0</div>
<div class="cell c" style="left:691.67px;top:737.24px;width:91.00px">0</div>
<div class="cell c" style="left:784.54px;top:737.24px;width:91.00px">0</div>
<div class="cell c" style="left:877.41px;top:737.24px;width:91.00px">0</div>
<div class="cell c" style="left:970.28px;top:737.24px;width:91.00px">0</div>
<div class="cell e" style="left:1063.15px;top:737.24px;width:91.00px"></div>
<div class="cell e" style="left:1156.02px;top:737.24px;width:91.00px"></div>
<div class="rl" style="left:488px;top:779.1px;font-size:11.7px">(none)</div>
<div class="rs" style="left:488px;top:795.1px">9 <span class="j">人のユーザー</span></div>
<div class="cell c" style="left:598.80px;top:774.08px;width:91.00px">9</div>
<div class="cell c" style="left:691.67px;top:774.08px;width:91.00px">0</div>
<div class="cell c" style="left:784.54px;top:774.08px;width:91.00px">0</div>
<div class="cell c" style="left:877.41px;top:774.08px;width:91.00px">0</div>
<div class="cell c" style="left:970.28px;top:774.08px;width:91.00px">0</div>
<div class="cell e" style="left:1063.15px;top:774.08px;width:91.00px"></div>
<div class="cell e" style="left:1156.02px;top:774.08px;width:91.00px"></div>
<div class="rl" style="left:481px;top:815.9px">5月1日～2024年5月...</div>
<div class="rs" style="left:481px;top:831.9px">6 <span class="j">人のユーザー</span></div>
<div class="cell gr" style="left:598.80px;top:810.92px;width:91.00px">6</div>
<div class="cell gr" style="left:691.67px;top:810.92px;width:91.00px">0</div>
<div class="cell gr" style="left:784.54px;top:810.92px;width:91.00px">0</div>
<div class="cell gr" style="left:877.41px;top:810.92px;width:91.00px">0</div>
<div class="cell gr" style="left:970.28px;top:810.92px;width:91.00px">0</div>
<div class="cell gr" style="left:1063.15px;top:810.92px;width:91.00px">0</div>
<div class="cell gr" style="left:1156.02px;top:810.92px;width:91.00px">0</div>
</body></html>
